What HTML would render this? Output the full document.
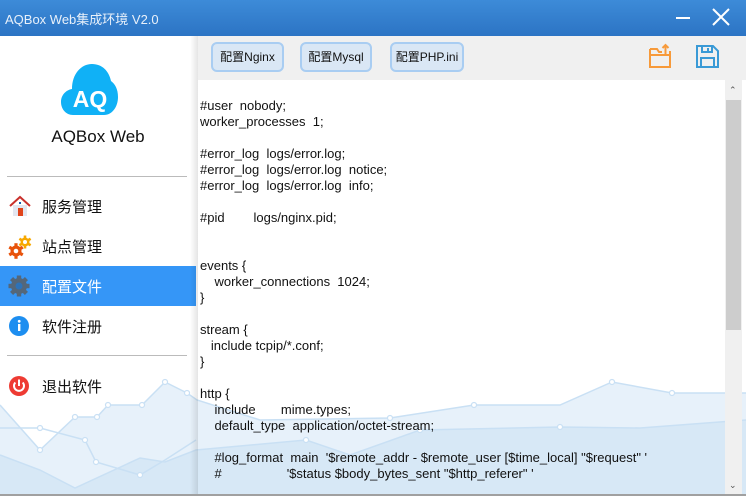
<!DOCTYPE html>
<html><head><meta charset="utf-8">
<style>
*{margin:0;padding:0;box-sizing:border-box}
body{width:746px;height:496px;overflow:hidden;background:#fff;font-family:"Liberation Sans","Noto Sans CJK SC",sans-serif;position:relative}
#title{position:absolute;left:0;top:0;width:746px;height:36px;background:linear-gradient(#3d8bd8,#2c74c4);color:#fff}
#title .t{position:absolute;left:5px;top:9px;font-size:13px;color:#e8f0fa}
#bg{position:absolute;left:0;top:340px}
#side{position:absolute;left:0;top:36px;width:196px;height:460px}
#shadow{position:absolute;left:190px;top:36px;width:8px;height:460px;background:linear-gradient(90deg,rgba(0,0,0,0),rgba(0,0,0,0.10))}
.menu{position:absolute;left:0;width:196px;height:40px;font-size:15px;color:#111}
.menu span{position:absolute;left:42px;top:10px}
.menu svg{position:absolute;left:8px;top:9px}
.sel{background:#3596f7;color:#fff}
.hr{position:absolute;left:7px;width:180px;height:1px;background:#bbb}
#tool{position:absolute;left:198px;top:36px;width:548px;height:44px;background:#f0f0f0}
.btn{position:absolute;top:6px;height:30px;border:2px solid #a9cdf2;border-radius:6px;background:#dae7f5;font-size:12px;color:#111;text-align:center;line-height:26px}
#ed{position:absolute;left:198px;top:80px;width:528px;height:415px;font-size:13px;line-height:16px;color:#111;white-space:pre;padding:18px 0 0 2px}
#sb{position:absolute;left:725px;top:80px;width:17px;height:415px;background:#f0f0f0}
</style></head><body>
<svg id="bg" width="746" height="156" viewBox="0 340 746 156">
<polygon points="0,405 40,450 75,417 97,417 108,405 142,405 165,382 187,393 197,400 260,420 390,418 474,405 560,405 612,382 672,393 746,393 746,496 0,496" fill="#e7f1fa"/>
<polygon points="0,455 40,470 75,488 140,458 165,462 196,450 306,440 350,455 420,430 560,427 640,428 746,420 746,496 0,496" fill="#d7e8f6"/>
<g fill="none" stroke="#c9e0f4" stroke-width="1.5">
<polyline points="0,405 40,450 75,417 97,417 108,405 142,405 165,382 187,393 197,400 260,420 390,418 474,405 560,405 612,382 672,393 746,393"/>
<polyline points="0,455 40,470 75,488 140,458 165,462 196,450 306,440 350,455 420,430 560,427 640,428 746,420"/>
<polyline points="0,428 40,428 85,440 96,462 140,475 165,460 196,440"/>
</g>
<g fill="#fff" stroke="#c9e0f4" stroke-width="1.2">
<circle cx="40" cy="450" r="2.5"/><circle cx="75" cy="417" r="2.5"/><circle cx="97" cy="417" r="2.5"/><circle cx="108" cy="405" r="2.5"/><circle cx="142" cy="405" r="2.5"/><circle cx="165" cy="382" r="2.5"/><circle cx="187" cy="393" r="2.5"/><circle cx="390" cy="418" r="2.5"/><circle cx="474" cy="405" r="2.5"/><circle cx="612" cy="382" r="2.5"/><circle cx="672" cy="393" r="2.5"/><circle cx="40" cy="428" r="2.5"/><circle cx="85" cy="440" r="2.5"/><circle cx="96" cy="462" r="2.5"/><circle cx="140" cy="475" r="2.5"/><circle cx="306" cy="440" r="2.5"/><circle cx="420" cy="430" r="2.5"/><circle cx="560" cy="427" r="2.5"/>
</g>
</svg>
<div id="title"><div class="t">AQBox Web集成环境 V2.0</div>
<div style="position:absolute;left:676px;top:17px;width:14px;height:2px;background:#fff"></div>
<svg style="position:absolute;left:712px;top:8px" width="18" height="18"><path d="M1 1L17 17M17 1L1 17" stroke="#fff" stroke-width="2"/></svg>
</div>
<div id="side">
<svg style="position:absolute;left:61px;top:26px" width="57" height="54" viewBox="0 0 57 54"><path d="M12 53C5 53 0 47 0 40C0 33 5 28 11 27C11 12 20 2 31 2C41 2 48 9 50 19C54 22 57 27 57 35C57 45 51 53 43 53Z" fill="#10b1f6"/><text x="29" y="45" font-family="Liberation Sans" font-weight="bold" font-size="23" fill="#fff" text-anchor="middle">AQ</text></svg>
<div style="position:absolute;left:0;width:196px;top:91px;text-align:center;font-size:17px;color:#111">AQBox Web</div>
<div class="hr" style="top:140px"></div>
<div class="menu" style="top:150px"><svg width="24" height="22" viewBox="0 0 24 22"><rect x="5" y="10" width="14" height="11" fill="#e3e6f0"/><path d="M2 11L12 2L22 11" fill="none" stroke="#c9302c" stroke-width="2"/><rect x="10" y="13" width="5" height="8" fill="#e0441b"/><rect x="11" y="7" width="2" height="2" fill="#1b5fb0"/></svg><span>服务管理</span></div>
<div class="menu" style="top:190px"><svg width="24" height="24" viewBox="0 0 24 24">
<g transform="translate(17 7)" fill="#f7a800"><circle r="4.5"/><rect x="-1.3" y="-6.5" width="2.6" height="13"/><rect x="-1.3" y="-6.5" width="2.6" height="13" transform="rotate(60)"/><rect x="-1.3" y="-6.5" width="2.6" height="13" transform="rotate(120)"/><circle r="2" fill="#fff"/></g>
<g transform="translate(8 16)" fill="#e8530b"><circle r="5.5"/><rect x="-1.6" y="-7.8" width="3.2" height="15.6"/><rect x="-1.6" y="-7.8" width="3.2" height="15.6" transform="rotate(60)"/><rect x="-1.6" y="-7.8" width="3.2" height="15.6" transform="rotate(120)"/><circle r="2.3" fill="#fff"/></g></svg><span>站点管理</span></div>
<div class="menu sel" style="top:230px"><svg width="22" height="22" viewBox="0 0 22 22"><g transform="translate(11 11)" fill="#54677a"><circle r="8"/><rect x="-2.2" y="-10.5" width="4.4" height="21"/><rect x="-2.2" y="-10.5" width="4.4" height="21" transform="rotate(45)"/><rect x="-2.2" y="-10.5" width="4.4" height="21" transform="rotate(90)"/><rect x="-2.2" y="-10.5" width="4.4" height="21" transform="rotate(135)"/><circle r="3.5" fill="#2d72b8"/></g></svg><span>配置文件</span></div>
<div class="menu" style="top:270px"><svg width="22" height="22"><circle cx="11" cy="11" r="10" fill="#1d8ef0"/><rect x="10" y="9" width="2.4" height="7" fill="#fff"/><circle cx="11.2" cy="6.3" r="1.4" fill="#fff"/></svg><span>软件注册</span></div>
<div class="hr" style="top:319px"></div>
<div class="menu" style="top:330px"><svg width="22" height="22"><circle cx="11" cy="11" r="10" fill="#ee3b33"/><path d="M7.3 7.5A5 5 0 1 0 14.7 7.5" fill="none" stroke="#fff" stroke-width="2"/><path d="M11 4.5V11" stroke="#fff" stroke-width="2"/></svg><span>退出软件</span></div>
</div>
<div id="shadow"></div>
<div id="tool">
<div class="btn" style="left:13px;width:73px">配置Nginx</div>
<div class="btn" style="left:102px;width:72px">配置Mysql</div>
<div class="btn" style="left:192px;width:74px">配置PHP.ini</div>
<svg style="position:absolute;left:450px;top:7px" width="24" height="26" viewBox="0 0 24 26"><path d="M2 6H9L11 9H14" fill="none" stroke="#f79a3a" stroke-width="2"/><path d="M21 9H22V24H2V6" fill="none" stroke="#f79a3a" stroke-width="2"/><path d="M2 12H22" stroke="#f79a3a" stroke-width="2"/><path d="M17.5 11V2M14.5 5L17.5 2L20.5 5" fill="none" stroke="#f79a3a" stroke-width="2"/></svg>
<svg style="position:absolute;left:498px;top:9px" width="23" height="23" viewBox="0 0 23 23"><path d="M1 1H17L22 6V22H1Z" fill="none" stroke="#3a9ad6" stroke-width="2"/><path d="M6 1V7H16V1" fill="none" stroke="#3a9ad6" stroke-width="2"/><rect x="11" y="3" width="2" height="3" fill="#3a9ad6"/><path d="M5 22V13H18V22" fill="none" stroke="#3a9ad6" stroke-width="2"/></svg>
</div>
<div id="ed">#user  nobody;
worker_processes  1;

#error_log  logs/error.log;
#error_log  logs/error.log  notice;
#error_log  logs/error.log  info;

#pid        logs/nginx.pid;


events {
    worker_connections  1024;
}

stream {
   include tcpip/*.conf;
}

http {
    include       mime.types;
    default_type  application/octet-stream;

    #log_format  main  '$remote_addr - $remote_user [$time_local] "$request" '
    #                  '$status $body_bytes_sent "$http_referer" '</div>
<div id="sb"><div style="position:absolute;left:1px;top:20px;width:15px;height:230px;background:#cdcdcd"></div>
<div style="position:absolute;left:4px;top:5px;font-size:9px;color:#555">&#8963;</div>
<div style="position:absolute;left:4px;top:400px;font-size:9px;color:#555">&#8964;</div></div>
<div style="position:absolute;left:0;top:494px;width:746px;height:2px;background:#a0a0a0"></div>
</body></html>
